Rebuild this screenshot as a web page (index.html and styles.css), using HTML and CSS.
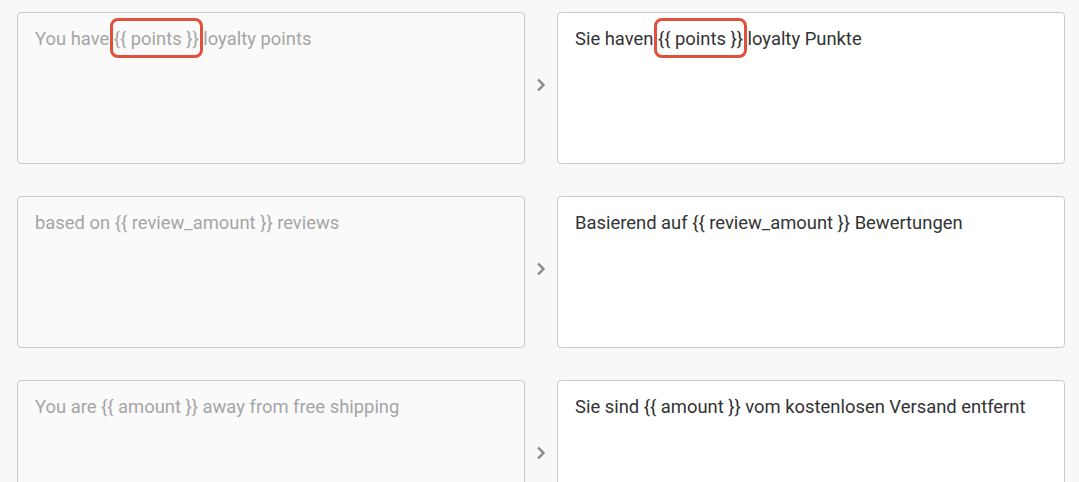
FILE: index.html
```html
<!DOCTYPE html>
<html lang="en">
<head>
  <meta charset="UTF-8" />
  <title>Translations</title>
  <link rel="stylesheet" href="styles.css">
</head>
<body>
  <div class="list">
    <div class="row">
      <div class="field source">You have <span class="mark">{{ points }}</span> loyalty points</div>
      <div class="arrow">
        <svg width="12" height="16" viewBox="0 0 12 16"><path d="M3 2.5 L8.5 8 L3 13.5" fill="none" stroke="#8a8a8a" stroke-width="2.4"/></svg>
      </div>
      <div class="field target">Sie haven <span class="mark">{{ points }}</span> loyalty Punkte</div>
    </div>

    <div class="row">
      <div class="field source">based on {{ review_amount }} reviews</div>
      <div class="arrow">
        <svg width="12" height="16" viewBox="0 0 12 16"><path d="M3 2.5 L8.5 8 L3 13.5" fill="none" stroke="#8a8a8a" stroke-width="2.4"/></svg>
      </div>
      <div class="field target">Basierend auf {{ review_amount }} Bewertungen</div>
    </div>

    <div class="row">
      <div class="field source">You are {{ amount }} away from free shipping</div>
      <div class="arrow">
        <svg width="12" height="16" viewBox="0 0 12 16"><path d="M3 2.5 L8.5 8 L3 13.5" fill="none" stroke="#8a8a8a" stroke-width="2.4"/></svg>
      </div>
      <div class="field target">Sie sind {{ amount }} vom kostenlosen Versand entfernt</div>
    </div>
  </div>
</body>
</html>
```

FILE: styles.css
```css
body {
  margin: 0;
  background-color: #f8f8f8;
  font-family: Roboto, 'Liberation Sans', sans-serif;
  overflow: hidden;
}

.list {
  padding: 12px 14px 0 17px;
  display: flex;
  flex-direction: column;
  gap: 32px;
}

.row {
  display: flex;
  align-items: stretch;
}

.field {
  flex: 1;
  height: 152px;
  box-sizing: border-box;
  border: 1px solid #cacaca;
  border-radius: 4px;
  padding: 14px 17px;
  font-size: 18.4px;
  line-height: 24px;
}

.source {
  background-color: #fafafa;
  color: #a5a5a5;
}

.target {
  background-color: #ffffff;
  color: #333333;
}

.arrow {
  width: 32px;
  display: flex;
  align-items: center;
  justify-content: center;
  padding-bottom: 6px;
}

.mark {
  position: relative;
}

.mark::after {
  content: "";
  position: absolute;
  left: -4px;
  right: -4px;
  top: -10px;
  bottom: -9px;
  border: 3px solid #e2503c;
  border-radius: 8px;
}
```
